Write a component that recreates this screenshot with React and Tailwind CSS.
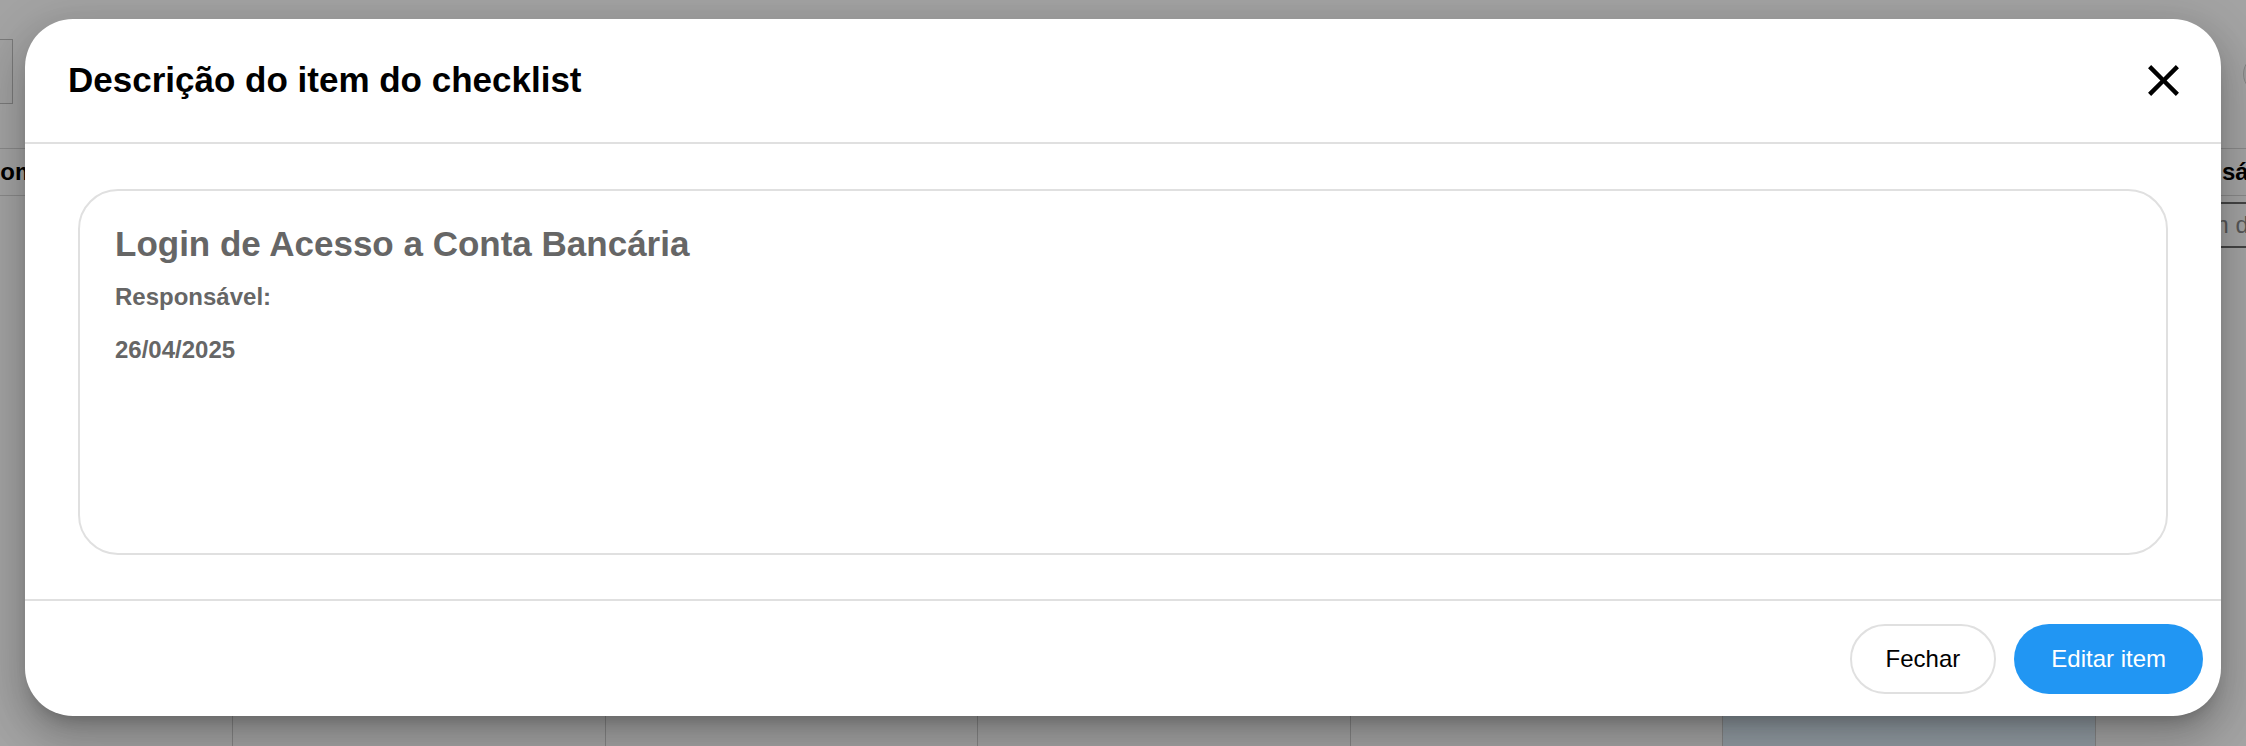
const COLS = ['w-[232px]', 'w-[372.5px]', 'w-[372.5px]', 'w-[372.5px]', 'w-[372.5px]', 'w-[372.5px]', 'w-[372.5px]']

function CloseIcon() {
  return (
    <svg viewBox="0 0 24 24" className="h-[53px] w-[53px]" fill="currentColor">
      <path d="M19 6.41 17.59 5 12 10.59 6.41 5 5 6.41 10.59 12 5 17.59 6.41 19 12 13.41 17.59 19 19 17.59 13.41 12z" />
    </svg>
  )
}

// the list page that sits behind the dialog
function BackgroundPage() {
  return (
    <div className="flex h-full flex-col">
      <div className="flex h-[104px] items-end justify-between">
        <div className="h-[65px] w-[13px] border-y border-r border-[#bdbdbd] bg-[#fafafa]" />
        <div className="mb-[10px] h-[40px] w-[40px] -mr-[37px] rounded-full border border-[#cfcfcf] bg-[#f5f5f5]" />
      </div>

      {/* table header */}
      <div className="mt-[44px] flex h-[48px] items-center justify-between border-y border-[#d6d6d6] text-[24px] font-bold text-black">
        <span className="-ml-[17px]">Nome</span>
        <span className="w-[112px] shrink-0 whitespace-nowrap">Responsável</span>
      </div>

      {/* filters */}
      <div className="mt-[6px] flex h-[46px] justify-end">
        <div className="flex w-[178px] shrink-0 items-center border-y-2 border-l-2 border-[#6b6b6b] px-[12px] whitespace-nowrap text-[24px] text-[#888]">
          Pesquisar em data
        </div>
      </div>

      <div className="flex-1" />

      {/* last visible row */}
      <div className="flex h-[60px]">
        {COLS.map((w, i) => (
          <div
            key={i}
            className={`${w} shrink-0 ${i > 0 ? 'border-l border-[#cfcfcf]' : ''} ${i === 5 ? 'bg-[#e3f2fd]' : 'bg-white'}`}
          />
        ))}
      </div>
    </div>
  )
}

export default function App() {
  return (
    <div className="relative h-[746px] w-full overflow-hidden bg-white font-['Liberation_Sans',Arial,sans-serif]">
      <BackgroundPage />
      <div className="absolute inset-0 bg-black/[0.36]" />

      {/* dialog */}
      <div className="absolute inset-0 flex items-start justify-center px-[25px] pt-[19px]">
        <div className="flex w-full flex-col overflow-hidden rounded-[48px] bg-white shadow-[0px_11px_15px_-7px_rgba(0,0,0,0.2),0px_24px_38px_3px_rgba(0,0,0,0.14),0px_9px_46px_8px_rgba(0,0,0,0.12)]">
          <div className="flex h-[125px] items-center justify-between border-b-2 border-[#e0e0e0] pl-[43px] pr-[31px]">
            <h2 className="text-[35px] font-bold text-black">Descrição do item do checklist</h2>
            <button className="text-black">
              <CloseIcon />
            </button>
          </div>

          <div className="px-[53px] pt-[45px] pb-[44px]">
            <div className="h-[366px] rounded-[40px] border-2 border-[#e0e0e0] px-[35px] pt-[33px] text-[#666]">
              <h3 className="text-[35px] font-bold leading-[40px]">Login de Acesso a Conta Bancária</h3>
              <p className="mt-[19px] text-[24px] font-bold leading-[28px]">Responsável:</p>
              <p className="mt-[25px] text-[24px] font-bold leading-[28px]">26/04/2025</p>
            </div>
          </div>

          <div className="flex h-[117px] items-center justify-end gap-[18px] border-t-2 border-[#e0e0e0] pr-[18px]">
            <button className="h-[70px] rounded-full border-2 border-[#e0e0e0] bg-white px-[34px] text-[24px] text-black">
              Fechar
            </button>
            <button className="h-[70px] rounded-full bg-[#2196f3] px-[37px] text-[24px] text-white">
              Editar item
            </button>
          </div>
        </div>
      </div>
    </div>
  )
}
